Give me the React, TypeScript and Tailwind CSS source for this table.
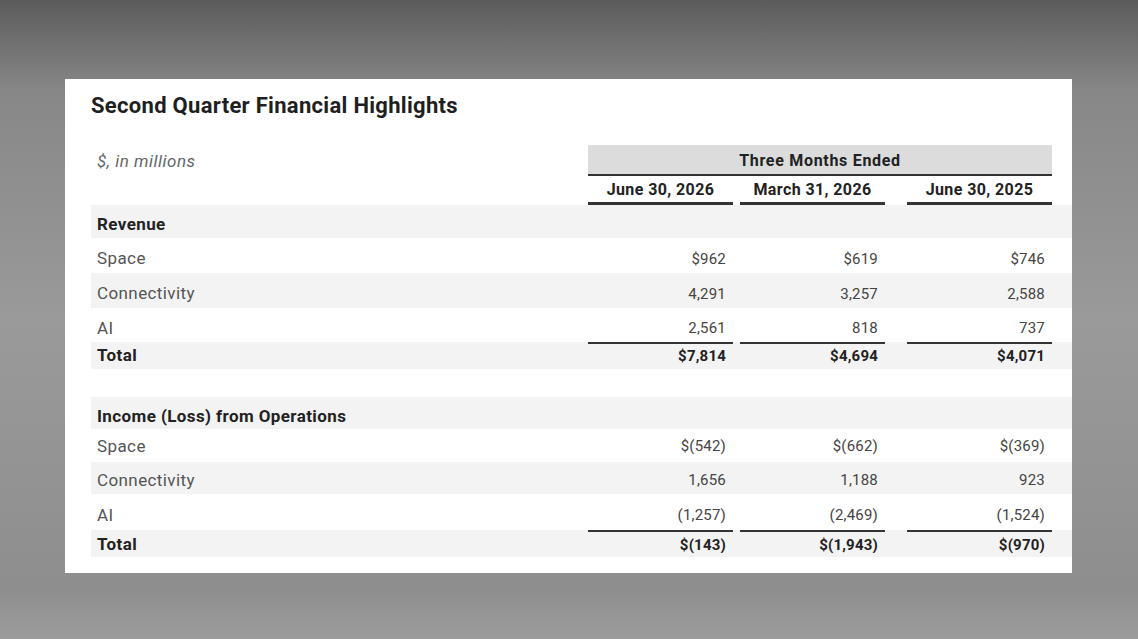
import React from 'react';

type Row = {
  label: string;
  values?: [string, string, string];
  kind: 'section' | 'item' | 'total';
  shaded: boolean;
  height: string;
  pad: string;
};

const revenueRows: Row[] = [
  { label: 'Revenue', kind: 'section', shaded: true, height: 'h-[33px]', pad: 'pt-[7px]' },
  { label: 'Space', values: ['$962', '$619', '$746'], kind: 'item', shaded: false, height: 'h-[35px]', pad: 'pt-[7px]' },
  { label: 'Connectivity', values: ['4,291', '3,257', '2,588'], kind: 'item', shaded: true, height: 'h-[35px]', pad: 'pt-[7px]' },
  { label: 'AI', values: ['2,561', '818', '737'], kind: 'item', shaded: false, height: 'h-[34px]', pad: 'pt-[7px]' },
  { label: 'Total', values: ['$7,814', '$4,694', '$4,071'], kind: 'total', shaded: true, height: 'h-[27px]', pad: 'pt-0' },
];

const incomeRows: Row[] = [
  { label: 'Income (Loss) from Operations', kind: 'section', shaded: true, height: 'h-[32px]', pad: 'pt-[8px]' },
  { label: 'Space', values: ['$(542)', '$(662)', '$(369)'], kind: 'item', shaded: false, height: 'h-[33px]', pad: 'pt-[2px]' },
  { label: 'Connectivity', values: ['1,656', '1,188', '923'], kind: 'item', shaded: true, height: 'h-[32px]', pad: 'pt-[5px]' },
  { label: 'AI', values: ['(1,257)', '(2,469)', '(1,524)'], kind: 'item', shaded: false, height: 'h-[36px]', pad: 'pt-[7px]' },
  { label: 'Total', values: ['$(143)', '$(1,943)', '$(970)'], kind: 'total', shaded: true, height: 'h-[27px]', pad: 'pt-[2px]' },
];

const colGap = ['ml-0', 'ml-[7px]', 'ml-[22px]'];

const TableRow: React.FC<{ row: Row }> = ({ row }) => {
  const bold = row.kind !== 'item';
  return (
    <div className={`flex ${row.height} ${row.shaded ? 'bg-[#f3f3f3]' : 'bg-white'}`}>
      <div
        className={`w-[497px] flex items-center pl-[6px] ${row.pad} text-[17px] tracking-[0.4px] ${
          bold ? 'font-bold text-[#222]' : 'text-[#555]'
        }`}
      >
        {row.label}
      </div>
      {row.values &&
        row.values.map((v, i) => (
          <div
            key={i}
            className={`${colGap[i]} w-[145px] flex items-center justify-end pr-[7px] ${row.pad} text-[15px] tracking-[0.2px] ${
              row.kind === 'total' ? 'border-t-2 border-[#333] font-bold text-[#222]' : 'text-[#444]'
            }`}
          >
            {v}
          </div>
        ))}
    </div>
  );
};

export default function App() {
  return (
    <div className="w-[1138px] h-[639px] overflow-hidden bg-[linear-gradient(180deg,#5b5b5b_0%,#878787_14%,#9a9a9a_50%,#8e8e8e_92%,#9c9c9c_100%)] pt-[79px] pl-[65px] font-['Roboto',sans-serif]">
      <div className="w-[1007px] h-[494px] bg-white pl-[26px] pt-[12px]">
        <h1 className="text-[22px] leading-[30px] font-bold text-[#1f1f1f] tracking-[0.3px]">
          Second Quarter Financial Highlights
        </h1>

        <div className="mt-[24px] flex h-[31px]">
          <div className="w-[497px] flex items-center pl-[6px] pt-[3px] text-[17px] italic text-[#666] tracking-[0.5px]">
            $, in millions
          </div>
          <div className="w-[464px] bg-[#dcdcdc] border-b-2 border-[#333] flex items-center justify-center pt-[3px] text-[16px] font-bold text-[#222] tracking-[0.7px]">
            Three Months Ended
          </div>
        </div>

        <div className="flex h-[29px]">
          <div className="w-[497px]" />
          {['June 30, 2026', 'March 31, 2026', 'June 30, 2025'].map((d, i) => (
            <div
              key={d}
              className={`${colGap[i]} w-[145px] flex items-center justify-center pt-[2px] border-b-[3px] border-[#333] text-[16px] font-bold text-[#222] tracking-[0.4px]`}
            >
              {d}
            </div>
          ))}
        </div>

        <div className="w-[981px]">
          {revenueRows.map((r, i) => (
            <TableRow key={'r' + i} row={r} />
          ))}
          <div className="h-[28px]" />
          {incomeRows.map((r, i) => (
            <TableRow key={'o' + i} row={r} />
          ))}
        </div>
      </div>
    </div>
  );
}
